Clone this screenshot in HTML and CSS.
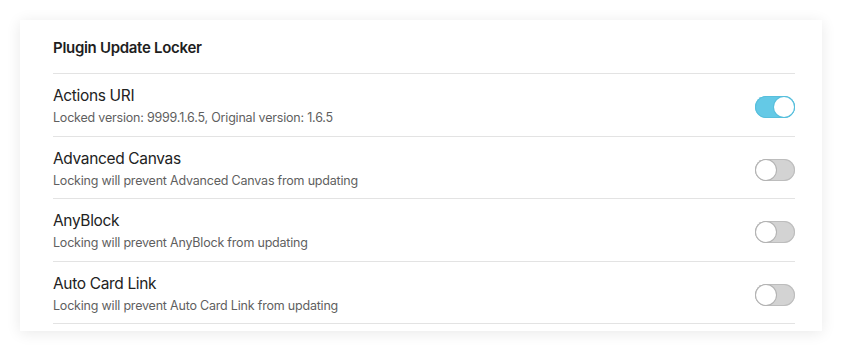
FILE: index.html
```html
<!DOCTYPE html>
<html lang="en">
<head>
    <meta charset="UTF-8">
    <meta name="viewport" content="width=device-width, initial-scale=1.0">
    <title>Plugin Update Locker</title>
    <link rel="stylesheet" href="styles.css">
</head>
<body>
    <div class="card">
        <h2 class="card-title">Plugin Update Locker</h2>

        <div class="setting">
            <div class="setting-info">
                <div class="setting-name">Actions URI</div>
                <div class="setting-desc">Locked version: 9999.1.6.5, Original version: 1.6.5</div>
            </div>
            <div class="toggle on"><span class="knob"></span></div>
        </div>

        <div class="setting">
            <div class="setting-info">
                <div class="setting-name">Advanced Canvas</div>
                <div class="setting-desc">Locking will prevent Advanced Canvas from updating</div>
            </div>
            <div class="toggle"><span class="knob"></span></div>
        </div>

        <div class="setting">
            <div class="setting-info">
                <div class="setting-name">AnyBlock</div>
                <div class="setting-desc">Locking will prevent AnyBlock from updating</div>
            </div>
            <div class="toggle"><span class="knob"></span></div>
        </div>

        <div class="setting">
            <div class="setting-info">
                <div class="setting-name">Auto Card Link</div>
                <div class="setting-desc">Locking will prevent Auto Card Link from updating</div>
            </div>
            <div class="toggle"><span class="knob"></span></div>
        </div>
    </div>
</body>
</html>
```

FILE: styles.css
```css
body {
    font-family: Inter, "Noto Sans", sans-serif;
    margin: 0;
    padding: 20px 21px 20px 20px;
    background: #ffffff;
}

.card {
    background: #ffffff;
    box-shadow: 0 2px 14px rgba(0, 0, 0, 0.09);
    padding: 0 27px 7px 33px;
}

.card-title {
    margin: 0;
    padding: 18px 0 15px 0;
    font-size: 15px;
    line-height: 20px;
    font-weight: 600;
    letter-spacing: -0.3px;
    color: #1e1e1e;
}

.setting {
    display: flex;
    align-items: center;
    justify-content: space-between;
    border-top: 1px solid #e3e3e3;
    border-bottom: 1px solid #e3e3e3;
    margin-bottom: -1px;
    padding: 12px 0 8.5px 0;
}

.setting:last-child {
    margin-bottom: 0;
}

.setting-name {
    font-size: 15.5px;
    line-height: 20px;
    letter-spacing: -0.35px;
    color: #222;
}

.setting-desc {
    margin-top: 3px;
    font-size: 12.5px;
    line-height: 18px;
    letter-spacing: -0.2px;
    color: #5f5f5f;
}

.toggle {
    width: 40px;
    height: 22px;
    border-radius: 11px;
    background: #d3d3d3;
    box-shadow: inset 0 0 0 1px #bdbdbd;
    position: relative;
    flex-shrink: 0;
    margin-top: 1px;
}

.toggle .knob {
    position: absolute;
    top: 1px;
    left: 1px;
    width: 20px;
    height: 20px;
    border-radius: 50%;
    background: #fff;
    box-shadow: 0 0 0 1px #b3b3b3;
}

.toggle.on {
    background: #64c9e6;
    box-shadow: inset 0 0 0 1px #58bfdc;
}

.toggle.on .knob {
    left: 19px;
    box-shadow: 0 0 0 1px #58bfdc;
}
```
